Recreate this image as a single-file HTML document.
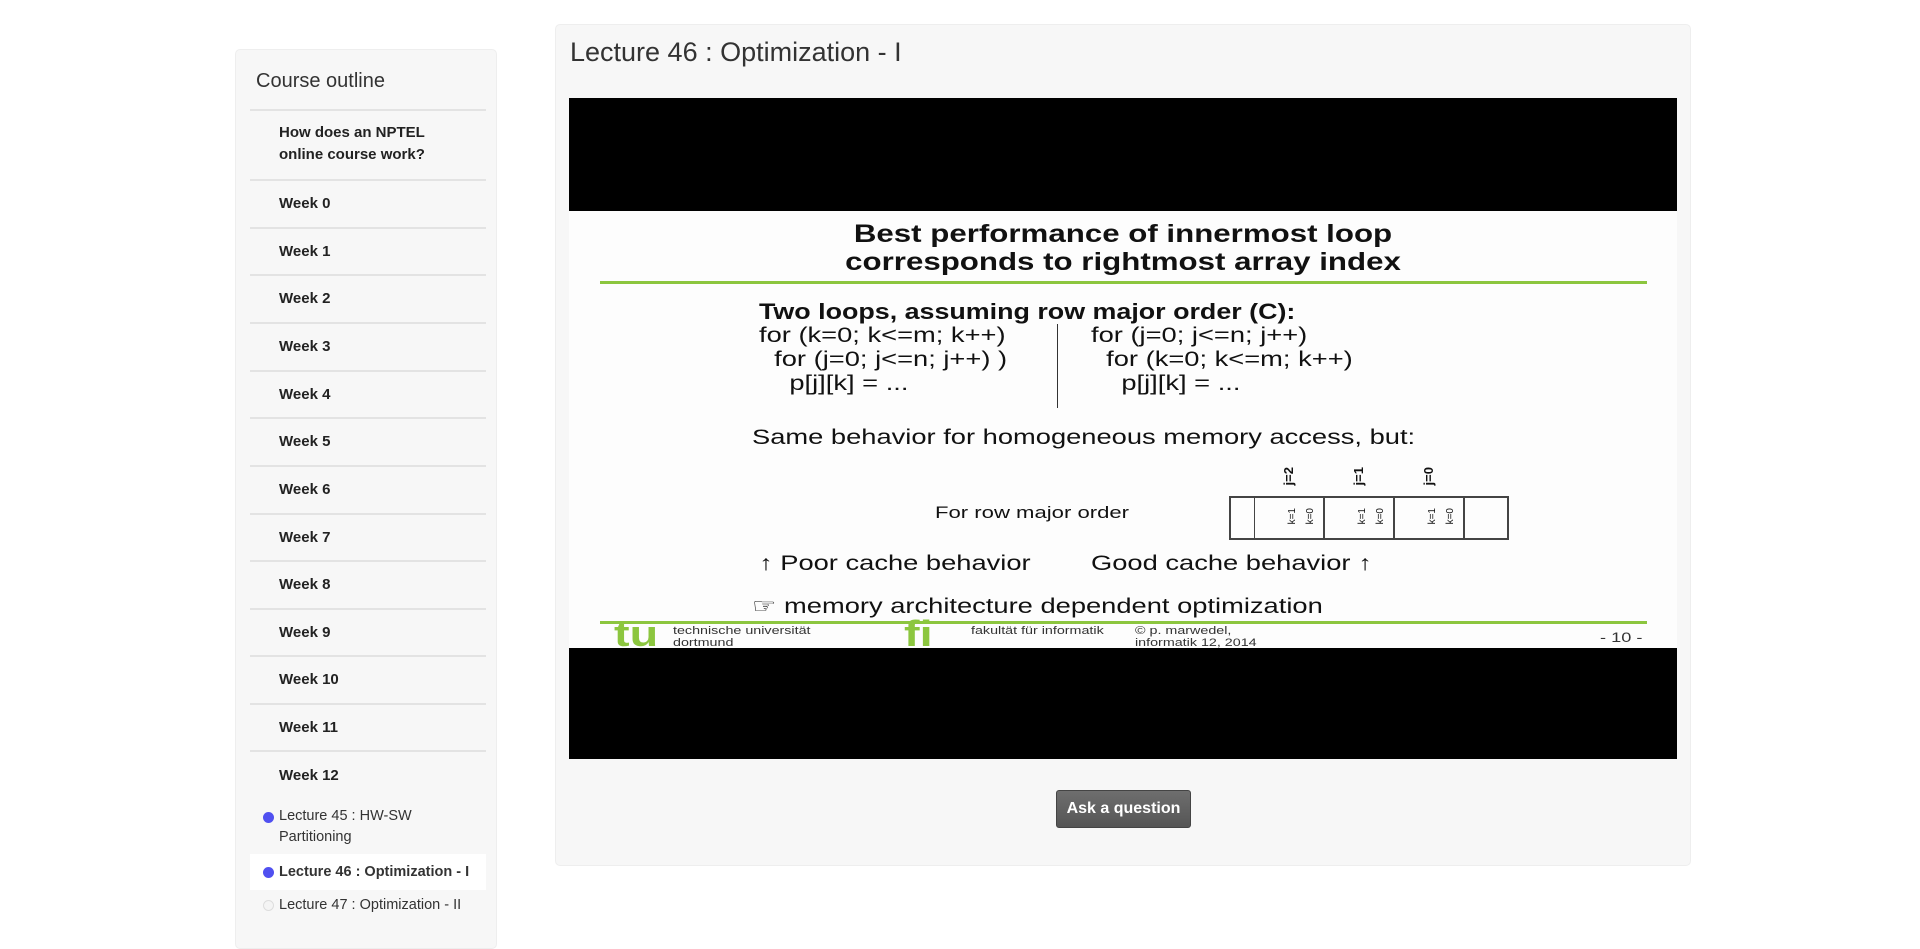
<!DOCTYPE html>
<html><head><meta charset="utf-8"><style>
*{box-sizing:border-box;margin:0;padding:0}
body{width:1920px;height:913px;background:#fff;font-family:"Liberation Sans",Arial,sans-serif;color:#333;position:relative;overflow:hidden}
.side{position:absolute;left:235px;top:49px;width:262px;height:900px;background:#f7f7f7;border:1px solid #eee;border-radius:5px}
.side h3{position:absolute;left:20px;top:20px;font-size:20px;font-weight:normal;color:#333}
.item{position:absolute;left:14px;width:236px;border-top:2px solid #e3e3e3;font-weight:bold;font-size:15px;color:#222;padding-left:29px}
.lec{position:absolute;left:14px;width:236px;font-size:14.5px;color:#333;padding-left:29px;line-height:21px}
.dot{position:absolute;left:13px;width:11px;height:11px;border-radius:50%;background:#5050f0}
.main{position:absolute;left:555px;top:24px;width:1136px;height:842px;background:#f7f7f7;border:1px solid #eee;border-radius:5px}
.main h1{position:absolute;left:14px;top:12px;font-size:27px;font-weight:normal;color:#333}
.video{position:absolute;left:569px;top:98px;width:1108px;height:661px;background:#000}
.slide{position:absolute;left:569px;top:211px;width:1108px;height:437px;background:#fdfdfd;color:#111}
.s{position:absolute;white-space:nowrap;transform:scaleX(1.3);transform-origin:0 0}
.btn{position:absolute;left:1056px;top:790px;width:135px;height:38px;background:linear-gradient(#6e6e6e,#555);border:1px solid #444;border-radius:3px;color:#fff;font-weight:bold;font-size:16px;text-align:center;line-height:36px}
.cell{border-right:2px solid #444;position:relative}
.k{position:absolute;top:10px;font-size:10px;writing-mode:vertical-rl;transform:rotate(180deg)}
</style></head><body>
<div class="side">
<h3>Course outline</h3>
<div class="item" style="top:59px;height:71px;padding-top:11px;line-height:22px">How does an NPTEL<br>online course work?</div>
<div class="item" style="top:129px;height:48px;line-height:46px">Week 0</div>
<div class="item" style="top:177px;height:48px;line-height:46px">Week 1</div>
<div class="item" style="top:224px;height:48px;line-height:46px">Week 2</div>
<div class="item" style="top:272px;height:48px;line-height:46px">Week 3</div>
<div class="item" style="top:320px;height:48px;line-height:46px">Week 4</div>
<div class="item" style="top:367px;height:48px;line-height:46px">Week 5</div>
<div class="item" style="top:415px;height:48px;line-height:46px">Week 6</div>
<div class="item" style="top:463px;height:48px;line-height:46px">Week 7</div>
<div class="item" style="top:510px;height:48px;line-height:46px">Week 8</div>
<div class="item" style="top:558px;height:48px;line-height:46px">Week 9</div>
<div class="item" style="top:605px;height:48px;line-height:46px">Week 10</div>
<div class="item" style="top:653px;height:48px;line-height:46px">Week 11</div>
<div class="item" style="top:700px;height:50px;line-height:48px">Week 12</div>
<div class="lec" style="top:752px;height:52px;padding-top:4px"><span class="dot" style="top:10px"></span>Lecture 45 : HW-SW<br>Partitioning</div>
<div class="lec" style="top:804px;height:36px;background:#fff;font-weight:bold;line-height:36px"><span class="dot" style="top:13px"></span>Lecture 46 : Optimization - I</div>
<div class="lec" style="top:840px;height:30px;line-height:30px"><span class="dot" style="top:10px;background:#f4f4f4;border:1px solid #ddd"></span>Lecture 47 : Optimization - II</div>
</div>
<div class="main"><h1>Lecture 46 : Optimization - I</h1></div>
<div class="video"></div>
<div class="slide">
<div class="s" style="left:0;width:1108px;text-align:center;top:9px;font-size:25px;font-weight:bold;line-height:28px;transform:scaleX(1.25);transform-origin:50% 0">Best performance of innermost loop<br>corresponds to rightmost array index</div>
<div style="position:absolute;left:31px;top:70px;width:1047px;height:3px;background:#8cc63f"></div>
<div class="s" style="left:190px;top:89px;font-size:22px;font-weight:bold;line-height:24px;transform:scaleX(1.22)">Two loops, assuming row major order (C):</div>
<div class="s" style="left:190px;top:113px;font-size:21px;line-height:24px">for (k=0; k&lt;=m; k++)<br>&nbsp; for (j=0; j&lt;=n; j++) )<br>&nbsp;&nbsp;&nbsp; p[j][k] = ...</div>
<div style="position:absolute;left:488px;top:113px;width:1px;height:84px;background:#333"></div>
<div class="s" style="left:522px;top:113px;font-size:21px;line-height:24px">for (j=0; j&lt;=n; j++)<br>&nbsp; for (k=0; k&lt;=m; k++)<br>&nbsp;&nbsp;&nbsp; p[j][k] = ...</div>
<div class="s" style="left:183px;top:215px;font-size:21px">Same behavior for homogeneous memory access, but:</div>
<div class="s" style="left:366px;top:292px;font-size:17px">For row major order</div>
<div style="position:absolute;left:660px;top:285px;width:280px;height:44px;border:2px solid #444;display:flex">
<div class="cell" style="width:24px;border-right:1px solid #444"></div><div class="cell" style="width:70px"><span class="k" style="left:32px">k=1</span><span class="k" style="left:50px">k=0</span></div><div class="cell" style="width:70px"><span class="k" style="left:32px">k=1</span><span class="k" style="left:50px">k=0</span></div><div class="cell" style="width:70px"><span class="k" style="left:32px">k=1</span><span class="k" style="left:50px">k=0</span></div></div>
<div class="k" style="position:absolute;left:712px;top:256px;font-size:13px;font-weight:bold">j=2</div>
<div class="k" style="position:absolute;left:782px;top:256px;font-size:13px;font-weight:bold">j=1</div>
<div class="k" style="position:absolute;left:852px;top:256px;font-size:13px;font-weight:bold">j=0</div>
<div class="s" style="left:190px;top:341px;font-size:21px">↑ Poor cache behavior</div>
<div class="s" style="left:522px;top:341px;font-size:21px">Good cache behavior ↑</div>
<div class="s" style="left:183px;top:383px;font-size:21px">☞ memory architecture dependent optimization</div>
<div style="position:absolute;left:31px;top:410px;width:1047px;height:3px;background:#8cc63f"></div>
<div class="s" style="left:45px;top:405px;font-size:36px;font-weight:bold;color:#8cc63f;line-height:36px">tu</div>
<div class="s" style="left:104px;top:414px;font-size:11px;line-height:12px;color:#333">technische universität<br>dortmund</div>
<div class="s" style="left:335px;top:405px;font-size:36px;font-weight:bold;color:#8cc63f;line-height:36px">fi</div>
<div class="s" style="left:402px;top:414px;font-size:11px;color:#333">fakultät für informatik</div>
<div class="s" style="left:566px;top:414px;font-size:11px;line-height:12px;color:#333">© p. marwedel,<br>informatik 12, 2014</div>
<div class="s" style="left:1031px;top:418px;font-size:14px;color:#333">- 10 -</div>
</div>
<div class="btn">Ask a question</div>
</body></html>
